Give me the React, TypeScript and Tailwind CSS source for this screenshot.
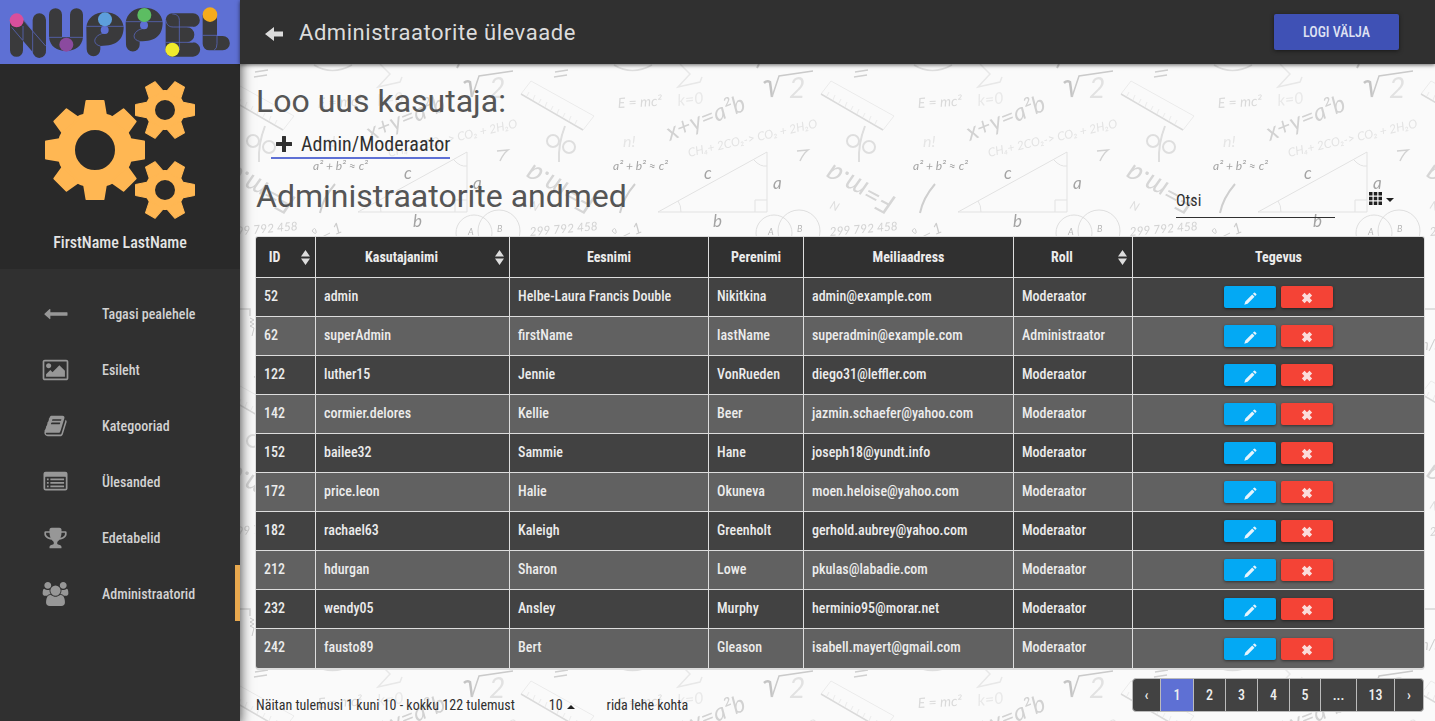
import type { ReactNode } from 'react';

type User = {
  id: number;
  username: string;
  first: string;
  last: string;
  email: string;
  role: string;
};

const users: User[] = [
  { id: 52, username: 'admin', first: 'Helbe-Laura Francis Double', last: 'Nikitkina', email: 'admin@example.com', role: 'Moderaator' },
  { id: 62, username: 'superAdmin', first: 'firstName', last: 'lastName', email: 'superadmin@example.com', role: 'Administraator' },
  { id: 122, username: 'luther15', first: 'Jennie', last: 'VonRueden', email: 'diego31@leffler.com', role: 'Moderaator' },
  { id: 142, username: 'cormier.delores', first: 'Kellie', last: 'Beer', email: 'jazmin.schaefer@yahoo.com', role: 'Moderaator' },
  { id: 152, username: 'bailee32', first: 'Sammie', last: 'Hane', email: 'joseph18@yundt.info', role: 'Moderaator' },
  { id: 172, username: 'price.leon', first: 'Halie', last: 'Okuneva', email: 'moen.heloise@yahoo.com', role: 'Moderaator' },
  { id: 182, username: 'rachael63', first: 'Kaleigh', last: 'Greenholt', email: 'gerhold.aubrey@yahoo.com', role: 'Moderaator' },
  { id: 212, username: 'hdurgan', first: 'Sharon', last: 'Lowe', email: 'pkulas@labadie.com', role: 'Moderaator' },
  { id: 232, username: 'wendy05', first: 'Ansley', last: 'Murphy', email: 'herminio95@morar.net', role: 'Moderaator' },
  { id: 242, username: 'fausto89', first: 'Bert', last: 'Gleason', email: 'isabell.mayert@gmail.com', role: 'Moderaator' },
];

function Logo() {
  return (
    <svg viewBox="0 0 720 192" className="block h-16 w-60" role="img" aria-label="Nuppel">
      <g fill="#3a3a3c">
        <path d="M30 60V151a19.500 19.500 0 0 0 39 0V122L98 156a19.500 19.500 0 0 0 40-5V60a20 20 0 0 0-40 0V94L71 60z" />
        <path d="M147 44a19.500 19.500 0 0 1 39 0V112H210V44a19.500 19.500 0 0 1 39 0V112C246 140 225 153 198 153S150 140 147 112z" />
        <path d="M259 82C262 54 284 37 315 37S368 54 371 82C370 118 352 138 301 138V148a20.500 20.500 0 0 1-41 0z" />
        <path d="M377 68C380 40 402 23 433 23S486 40 488 68C487 104 470 124 419 124V134a20.500 20.500 0 0 1-41 0z" />
        <path d="M517 40H579a20.500 20.500 0 0 1 0 41H560a21 21 0 0 1 0 46H579a21 21 0 0 1 0 43H517a20 20 0 0 1-20-20V60a20 20 0 0 1 20-20z" />
        <path d="M608 44H651V108H668a21 21 0 0 1 0 43H628a20 20 0 0 1-20-20z" />
      </g>
      <g fill="none" stroke="#5e70d4" strokeWidth="2">
        <path d="M69 78V120M35 82L69 122M98 94V156M71 62L137 138" />
        <path d="M147 112H186M210 112H249" />
        <path d="M259 79H371M322 98C282 100 272 132 301 138" />
        <path d="M377 65H488M440 84C400 86 390 118 419 124" />
        <path d="M497 60C500 76 508 81 520 81H580M517 42C530 42 538 48 538 62V150M538 127H580M497 127H538" />
        <path d="M608 106H651V131Q651 146 643 150" />
      </g>
      <g fill="#5e70d4">
        <circle cx="314" cy="90" r="12" />
        <circle cx="432" cy="76" r="12" />
      </g>
      <circle cx="50" cy="61" r="21" fill="#d84f9c" />
      <circle cx="199" cy="134" r="21" fill="#8b4a9f" />
      <circle cx="315" cy="58" r="21" fill="#5d9fdc" />
      <circle cx="433" cy="45" r="21" fill="#5cbd62" />
      <circle cx="517" cy="149" r="21" fill="#f1ea2c" />
      <circle cx="630" cy="44" r="22" fill="#f4ab1c" />
    </svg>
  );
}

function Gears() {
  const big = [0, 45, 90, 135, 180, 225, 270, 315];
  const small = [30, 90, 150, 210, 270, 330];
  return (
    <svg viewBox="0 0 152 140" className="block h-[140px] w-[152px]" fill="#ffb753" stroke="#ffb753" aria-hidden="true">
      <g transform="translate(51 70)">
        <circle r="29" fill="none" strokeWidth="18" />
        {big.map((a) => (
          <path key={a} transform={`rotate(${a})`} strokeWidth="2" strokeLinejoin="round" d="M-8.500-49H8.500L11-34H-11z" />
        ))}
      </g>
      {[30, 110].map((y) => (
        <g key={y} transform={`translate(121 ${y})`}>
          <circle r="15" fill="none" strokeWidth="10" />
          {small.map((a) => (
            <path key={a} transform={`rotate(${a})`} strokeWidth="1" strokeLinejoin="round" d="M-5.500-29.500H5.500L8-17H-8z" />
          ))}
        </g>
      ))}
    </svg>
  );
}

const navIcon = 'h-[24px] w-[27px] fill-[#979797]';

const BackIcon = (
  <svg viewBox="0 0 1792 1792" className={navIcon} aria-hidden="true">
    <path d="M1792 800v192q0 14-9 23t-23 9H512v224q0 21-19 29t-35-5L74 928q-10-10-10-23 0-14 10-24l384-354q16-14 35-6 19 9 19 29v224h1248q14 0 23 9t9 23z" />
  </svg>
);
const ImageIcon = (
  <svg viewBox="0 0 1920 1792" className={navIcon} aria-hidden="true">
    <path d="M640 576q0 80-56 136t-136 56-136-56-56-136 56-136 136-56 136 56 56 136zm1024 384v448H256v-192l320-320 160 160 512-512zm96-704H160q-13 0-22.500 9.500T128 288v1216q0 13 9.500 22.500t22.500 9.500h1600q13 0 22.500-9.500t9.500-22.500V288q0-13-9.500-22.500T1760 256zm160 32v1216q0 66-47 113t-113 47H160q-66 0-113-47T0 1504V288q0-66 47-113t113-47h1600q66 0 113 47t47 113z" />
  </svg>
);
const BookIcon = (
  <svg viewBox="0 0 1664 1792" className={navIcon} aria-hidden="true">
    <path d="M1639 478q40 57 18 129l-275 906q-19 64-76.500 107.500T1183 1664H260q-77 0-148.500-53.500T12 1479q-24-67-2-127 0-4 3-27t4-37q1-8-3-21.500t-3-19.500q2-11 8-21t16.500-23.500T52 1179q23-38 45-91.500t30-91.500q3-10 .5-30t-.5-28q3-11 17-28t17-23q21-36 42-92t25-90q1-9-2.500-32t.5-28q4-13 22-30.500t22-22.500q19-26 42.500-84.500T340 411q1-8-3-25.500t-2-26.500q2-8 9-18t18-23 17-21q8-12 16.500-30.500t15-35 16-36 19.500-32T469.500 140t36-11.500T553 134l-1 3q38-9 51-9h761q74 0 114 56t18 130l-274 906q-36 119-71.500 153.500T1022 1408H153q-27 0-38 15-11 16-1 43 24 70 144 70h923q29 0 56-15.500t35-41.500l300-987q7-22 5-57 38 15 59 43zm-1064 2q-4 13 2 22.500t20 9.500h608q13 0 25.500-9.500T1247 480l21-64q4-13-2-22.500t-20-9.500H638q-13 0-25.500 9.500T596 416zm-83 256q-4 13 2 22.500t20 9.500h608q13 0 25.500-9.500T1164 736l21-64q4-13-2-22.500t-20-9.500H555q-13 0-25.500 9.500T513 672z" />
  </svg>
);
const ListIcon = (
  <svg viewBox="0 0 1792 1792" className={navIcon} aria-hidden="true">
    <path
      fillRule="evenodd"
      d="M160 128H1632a160 160 0 0 1 160 160V1376a160 160 0 0 1-160 160H160A160 160 0 0 1 0 1376V288A160 160 0 0 1 160 128zM128 544V1376q0 32 32 32H1632q32 0 32-32V544q0-32-32-32H160q-32 0-32 32z"
    />
    <path d="M256 640h128v128H256zM256 896h128v128H256zM256 1152h128v128H256zM512 640h1024v128H512zM512 896h1024v128H512zM512 1152h1024v128H512z" />
  </svg>
);
const TrophyIcon = (
  <svg viewBox="0 0 1664 1792" className={navIcon} aria-hidden="true">
    <path d="M458 883q-74-162-74-371H128v96q0 78 94.500 162T458 883zm1078-275v-96h-256q0 209-74 371 141-29 235.500-113t94.500-162zm128-128v128q0 71-41.500 143t-112 130-173 97.500T1122 1020q-42 54-95 95-38 34-52.500 72.500T960 1280q0 54 30.500 91t97.500 37q75 0 133.500 45.500T1280 1568v64q0 14-9 23t-23 9H416q-14 0-23-9t-9-23v-64q0-69 58.500-114.500T576 1408q67 0 97.500-37t30.500-91q0-54-14.500-92.500T637 1115q-53-41-95-95-113-5-215.500-44.500t-173-97.500-112-130T0 608V480q0-40 28-68t68-28h288v-96q0-66 47-113t113-47h576q66 0 113 47t47 113v96h288q40 0 68 28t28 68z" />
  </svg>
);
const UsersIcon = (
  <svg viewBox="0 0 1920 1792" className={navIcon} aria-hidden="true">
    <path d="M593 896q-162 5-265 128H194q-82 0-138-40.500T0 865q0-353 124-353 6 0 43.500 21t97.500 42.500T384 597q67 0 133-23-5 37-5 66 0 139 81 256zm1071 637q0 120-73 189.500t-194 69.500H523q-121 0-194-69.500T256 1533q0-53 3.500-103.500t14-109T300 1212t43-97.500 62-81 85.500-53.500T602 960q10 0 43 21.500t73 48 107 48 135 21.500 135-21.500 107-48 73-48 43-21.500q61 0 111.500 20t85.500 53.500 62 81 43 97.500 26.500 108.500 14 109 3.500 103.500zM640 256q0 106-75 181t-181 75-181-75-75-181 75-181T384 0t181 75 75 181zm704 384q0 159-112.500 271.500T960 1024 688.500 911.500 576 640t112.500-271.500T960 256t271.500 112.500T1344 640zm576 225q0 78-56 118.500t-138 40.500h-134q-103-123-265-128 81-117 81-256 0-29-5-66 66 23 133 23 59 0 119-21.500t97.500-42.500 43.500-21q124 0 124 353zm-128-609q0 106-75 181t-181 75-181-75-75-181 75-181 181-75 181 75 75 181z" />
  </svg>
);

const navItems: { label: string; icon: ReactNode; active?: boolean }[] = [
  { label: 'Tagasi pealehele', icon: BackIcon },
  { label: 'Esileht', icon: ImageIcon },
  { label: 'Kategooriad', icon: BookIcon },
  { label: 'Ülesanded', icon: ListIcon },
  { label: 'Edetabelid', icon: TrophyIcon },
  { label: 'Administraatorid', icon: UsersIcon, active: true },
];

function Sidebar() {
  return (
    <aside className="relative z-20 w-60 shrink-0 bg-[#303030] shadow-[0_0_12px_rgba(0,0,0,0.8)]">
      <a href="#" className="block bg-[#5e70d4]">
        <Logo />
      </a>
      <div className="flex flex-col items-center bg-[#292929] pt-4 pb-[15px]">
        <Gears />
        <p className="mt-3 text-base leading-[22px] font-medium text-[#e4e4e4]">FirstName LastName</p>
      </div>
      <nav className="pt-4">
        {navItems.map((item) => (
          <a
            key={item.label}
            href="#"
            className={`flex h-14 items-center gap-[33px] border-r-5 pt-px pl-[42px] text-sm font-medium text-[#d2d2d2] ${
              item.active ? 'border-[#e8a84e]' : 'border-transparent'
            }`}
          >
            {item.icon}
            {item.label}
          </a>
        ))}
      </nav>
    </aside>
  );
}

function Ruler() {
  return (
    <g stroke="#ebebeb" fill="none">
      <path d="M291 17L354 52L343 66L281 30z" />
      <path d="M281 30L343 66" stroke="#dadada" strokeWidth="1.500" />
      <path d="M287 32l2-4M293 36l2-5M299 39l2-4M305 43l2-5M311 46l2-4M317 50l2-5M323 53l2-4M329 57l2-5M335 60l2-4" />
    </g>
  );
}

function EdgeNotes() {
  return (
    <g>
      <text transform="translate(357 134) rotate(208)" fontSize="28" fill="#d6d6d6">F=m.a</text>
      <text transform="translate(290 172) rotate(-5)" fontSize="12" fill="#d3d3d3">299 792 458</text>
      <text transform="translate(289 144) rotate(25)" fontSize="12" fill="#dedede">N</text>
      <text x="277" y="286" fontSize="15" fill="#cfcfcf">m/s</text>
      <path d="M282 245H310V252" fill="none" stroke="#d6d6d6" strokeWidth="1.500" />
      <path d="M310 254l4 2-4 2 4 2-4 2 4 2-2 8" fill="none" stroke="#cccccc" />
    </g>
  );
}

function MathBackdrop() {
  return (
    <svg className="absolute inset-0 h-full w-full" aria-hidden="true">
      <defs>
        <pattern id="math" width="300" height="300" patternUnits="userSpaceOnUse">
          <g fontFamily="Lato, sans-serif" fontStyle="italic">
            <path d="M15 8l13-2M14 13l13-2" stroke="#d0d0d0" strokeWidth="1.500" />
            <Ruler />
            <g transform="translate(-300 0)">
              <Ruler />
            </g>
            <EdgeNotes />
            <g transform="translate(-300 0)">
              <EdgeNotes />
            </g>
            <path d="M224 19Q227 16 230 18L232 33" fill="none" stroke="#c4c4c4" strokeWidth="2.500" />
            <path d="M232 33L239 12L273 7" fill="none" stroke="#cacaca" strokeWidth="1.500" />
            <text x="249" y="34" fontSize="28" fill="#e2e2e2">2</text>
            <path d="M74 1Q92 12 112 1" fill="none" stroke="#dedede" strokeWidth="1.500" />
            <path d="M140 0L150 10L138 23L160 18L162 13" fill="none" stroke="#e8e8e8" strokeWidth="1.500" />
            <path d="M219 0l-2 4" stroke="#cccccc" strokeWidth="2" />
            <text transform="translate(78 44) rotate(-3)" fontSize="14" fill="#dadada">E = mc²</text>
            <text transform="translate(138 42) rotate(-6)" fontSize="16" fill="#e9e9e9">k=0</text>
            <text transform="translate(130 77) rotate(-22)" fontSize="24" fill="#d2d2d2">x+y=a²b</text>
            <text transform="translate(149 93) rotate(-13)" fontSize="12" fill="#e4e4e4">CH₄+ 2CO₂-&gt; CO₂ + 2H₂O</text>
            <g fill="none" stroke="#dedede" strokeWidth="2">
              <circle cx="13" cy="77" r="6" />
              <circle cx="29" cy="83" r="6" />
              <path d="M25 62Q18 80 19 98" />
            </g>
            <text x="83" y="83" fontSize="16" fill="#e6e6e6">n!</text>
            <path d="M257 87l11-1q-5 4-8 11" fill="none" stroke="#d2d2d2" strokeWidth="1.500" />
            <text x="73" y="106" fontSize="12" fill="#a4a4a4">a² + b² ≈ c²</text>
            <g fill="none" stroke="#e2e2e2">
              <path d="M118 148H227V88zM215 148V136H227M141 148q0-7-3-11M214 96q6 7 13 6" />
            </g>
            <g fontSize="17" fill="#a4a4a4">
              <text x="164" y="115">c</text>
              <text x="233" y="125">a</text>
              <text x="173" y="163">b</text>
            </g>
            <path d="M80 149Q83 134 95 120" fill="none" stroke="#cfcfcf" strokeWidth="2" />
            <circle cx="234" cy="169" r="18" fill="none" stroke="#dedede" />
            <circle cx="259" cy="167" r="21" fill="none" stroke="#dedede" />
            <g fontSize="9" fill="#b8b8b8">
              <text x="228" y="171">A</text>
              <text x="257" y="168">B</text>
            </g>
            <path d="M72 167q3-5 4 0t-4 0M82 173l8-4M83 176l8-3" fill="none" stroke="#cfcfcf" />
            <text transform="translate(95 171) rotate(-22)" fontSize="15" fill="#cccccc">1</text>
          </g>
        </pattern>
      </defs>
      <rect width="100%" height="100%" fill="#fafafa" />
      <rect width="100%" height="100%" fill="url(#math)" />
    </svg>
  );
}

const columns: { label: string; width?: string; sortable?: boolean }[] = [
  { label: 'ID', width: 'w-[60px]', sortable: true },
  { label: 'Kasutajanimi', width: 'w-[194px]', sortable: true },
  { label: 'Eesnimi', width: 'w-[199px]' },
  { label: 'Perenimi', width: 'w-[95px]' },
  { label: 'Meiliaadress', width: 'w-[210px]' },
  { label: 'Roll', width: 'w-[119px]', sortable: true },
  { label: 'Tegevus' },
];

function SortIcon() {
  return (
    <svg viewBox="0 0 9 15" className="absolute top-[13px] right-[5px] h-[15px] w-[9px] fill-[#dddddd]" aria-hidden="true">
      <path d="M0 6.500L4.500 0L9 6.500zM0 8.500H9L4.500 15z" />
    </svg>
  );
}

function UserTable() {
  const cell = 'border-r border-[#dddddd] px-2 pb-[3px] last:border-r-0';
  return (
    <table className="w-full table-fixed border-separate border-spacing-0 overflow-hidden rounded-xs text-sm text-[#ececec] shadow-[0_0_0_1px_#dddddd,0_2px_0_#dddddd]">
      <thead>
        <tr className="h-[41px] bg-[#303030]">
          {columns.map((c) => (
            <th
              key={c.label}
              scope="col"
              className={`relative border-r border-b border-[#dddddd] pl-2 font-bold last:border-r-0 ${c.sortable ? 'pr-[30px]' : 'pr-2'} ${c.width ?? ''}`}
            >
              {c.label}
              {c.sortable && <SortIcon />}
            </th>
          ))}
        </tr>
      </thead>
      <tbody className="font-medium [&>tr:last-child>td]:border-b-0 [&>tr>td]:border-b">
        {users.map((u) => (
          <tr key={u.id} className="h-[39px] odd:bg-[#424242] even:bg-[#616161]">
            <td className={cell}>{u.id}</td>
            <td className={cell}>{u.username}</td>
            <td className={cell}>{u.first}</td>
            <td className={cell}>{u.last}</td>
            <td className={cell}>{u.email}</td>
            <td className={cell}>{u.role}</td>
            <td className="border-[#dddddd]">
              <div className="flex items-center justify-center gap-[5px]">
                <button
                  type="button"
                  aria-label={`Muuda ${u.username}`}
                  className="flex h-[22px] w-[52px] items-center justify-center rounded-xs bg-[#03a9f4] shadow-[0_1px_3px_rgba(0,0,0,0.5)]"
                >
                  <svg viewBox="0 0 13 13" className="mt-0.5 h-[13px] w-[13px] fill-[#e4f4fd]" aria-hidden="true">
                    <path d="M.3 12.700L1.300 9.400L8.200 2.500L10.500 4.800L3.600 11.700zM8.900 1.800L10 .7q.5-.5 1 0l1.300 1.300q.5.5 0 1L11.200 4.100z" />
                  </svg>
                </button>
                <button
                  type="button"
                  aria-label={`Kustuta ${u.username}`}
                  className="flex h-[22px] w-[52px] items-center justify-center rounded-xs bg-[#f44336] shadow-[0_1px_3px_rgba(0,0,0,0.5)]"
                >
                  <svg viewBox="0 0 12 12" className="mt-0.5 h-3 w-3" aria-hidden="true">
                    <path d="M2.200 2.200L9.800 9.800M9.800 2.200L2.200 9.800" stroke="#fbdcda" strokeWidth="3.800" />
                  </svg>
                </button>
              </div>
            </td>
          </tr>
        ))}
      </tbody>
    </table>
  );
}

const pages: { label: string; width: string }[] = [
  { label: '‹', width: 'w-[28px]' },
  { label: '1', width: 'w-[33px]' },
  { label: '2', width: 'w-[32px]' },
  { label: '3', width: 'w-[32px]' },
  { label: '4', width: 'w-[32px]' },
  { label: '5', width: 'w-[31px]' },
  { label: '...', width: 'w-[36px]' },
  { label: '13', width: 'w-[38px]' },
  { label: '›', width: 'w-[28px]' },
];

export default function App() {
  return (
    <div className="flex min-h-screen font-['Roboto_Condensed','Roboto','Liberation_Sans_Narrow',sans-serif]">
      <Sidebar />
      <div className="flex min-w-0 flex-1 flex-col">
        <header className="relative z-30 flex h-16 items-center bg-[#303030] pr-9 pl-[25px] shadow-[0_1px_4px_rgba(0,0,0,0.6)]">
          <a href="#" aria-label="Tagasi" className="mt-1">
            <svg viewBox="0 0 18 14" className="h-[14px] w-[18px] fill-[#dcdcdc]" aria-hidden="true">
              <path d="M0 7L9 0V4.500H18V9.500H9V14z" />
            </svg>
          </a>
          <h1 className="ml-4 pt-0.5 font-['Roboto',sans-serif] text-[22px] leading-7 tracking-wide text-[#dcdcdc]">Administraatorite ülevaade</h1>
          <button
            type="button"
            className="ml-auto h-9 w-[125px] rounded-xs bg-[#3f51b5] text-sm font-medium text-[#dfe2f3] shadow-[0_1px_4px_rgba(0,0,0,0.5)]"
          >
            LOGI VÄLJA
          </button>
        </header>
        <main className="relative flex-1 pr-[11px] pl-4">
          <MathBackdrop />
          <div className="relative">
            <h2 className="pt-4 font-['Roboto',sans-serif] text-[32px] leading-[42px] text-[#555555]">Loo uus kasutaja:</h2>
            <a
              href="#"
              className="mt-2 ml-[15px] inline-flex h-[29px] items-center gap-[9px] border-b-2 border-[#5e70d4] pt-px pl-[5px] text-xl text-[#303030]"
            >
              <svg viewBox="0 0 16 16" className="h-4 w-4 fill-[#303030]" aria-hidden="true">
                <path d="M6.500 0h3q.5 0 .5.5V6h5.500q.5 0 .5.5v3q0 .5-.5.5H10v5.500q0 .5-.5.5h-3q-.5 0-.5-.5V10H.5Q0 10 0 9.500v-3Q0 6 .5 6H6V.500Q6 0 6.500 0z" />
              </svg>
              Admin/Moderaator
            </a>
            <div className="flex items-start justify-between">
              <h2 className="pt-4 pb-5 font-['Roboto',sans-serif] text-[32px] leading-[42px] text-[#555555]">Administraatorite andmed</h2>
              <div className="flex items-start gap-[34px] pt-6 pr-[29px]">
                <input
                  type="text"
                  aria-label="Otsi"
                  placeholder="Otsi"
                  className="h-[35px] w-[159px] border-b border-[#303030] pt-px text-base text-[#303030] outline-none placeholder:text-[#303030]"
                />
                <button type="button" aria-label="Veerud" className="mt-[9px] flex items-center gap-1">
                  <svg viewBox="0 0 13 13" className="h-[13px] w-[13px] fill-[#212121]" aria-hidden="true">
                    <path d="M0 0h3.500v3.500H0zM4.750 0h3.500v3.500h-3.500zM9.500 0H13v3.500H9.500zM0 4.750h3.500v3.500H0zM4.750 4.750h3.500v3.500h-3.500zM9.500 4.750H13v3.500H9.500zM0 9.500h3.500V13H0zM4.750 9.500h3.500V13h-3.500zM9.500 9.500H13V13H9.500z" />
                  </svg>
                  <svg viewBox="0 0 8 4" className="mt-0.5 mr-px h-1 w-2 fill-[#212121]" aria-hidden="true">
                    <path d="M0 0H8L4 4z" />
                  </svg>
                </button>
              </div>
            </div>
            <UserTable />
            <div className="flex items-start justify-between pt-2.5 pb-2.5 text-sm text-[#303030]">
              <div className="flex items-center pt-[17px] leading-5">
                <span>Näitan tulemusi 1 kuni 10 - kokku 122 tulemust</span>
                <button type="button" aria-label="Ridu lehel: 10" className="ml-[34px] flex items-center gap-1">
                  10
                  <svg viewBox="0 0 8 4" className="mt-1 h-1 w-2 fill-[#212121]" aria-hidden="true">
                    <path d="M0 4H8L4 0z" />
                  </svg>
                </button>
                <span className="ml-8">rida lehe kohta</span>
              </div>
              <nav aria-label="Leheküljed" className="flex h-[34px] divide-x divide-[#bbbbbb] overflow-hidden rounded-sm border border-[#bbbbbb] bg-[#424242]">
                {pages.map((p) => (
                  <a
                    key={p.label}
                    href="#"
                    className={`flex items-center justify-center font-medium text-[#eeeeee] ${p.width} ${p.label === '1' ? 'bg-[#5e70d4]' : ''}`}
                  >
                    {p.label}
                  </a>
                ))}
              </nav>
            </div>
          </div>
        </main>
      </div>
    </div>
  );
}
